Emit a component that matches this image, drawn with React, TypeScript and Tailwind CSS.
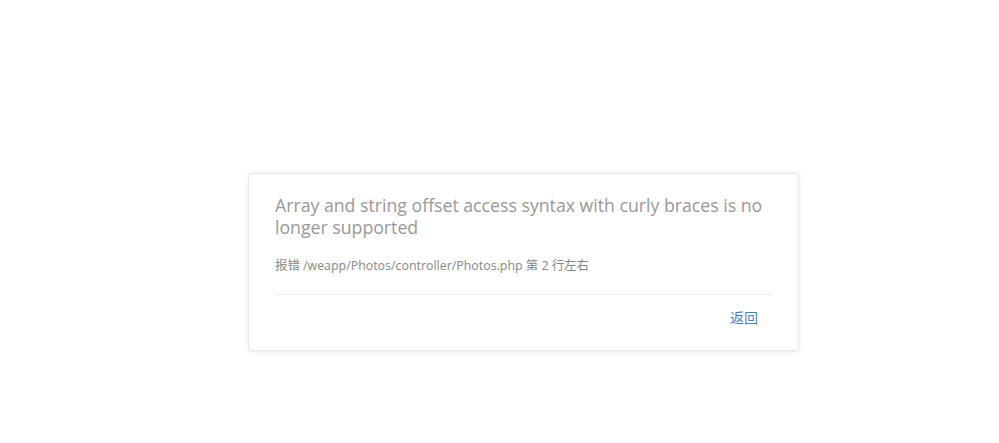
export default function App() {
  return (
    <div className="min-h-[443px] w-full bg-white pt-[173px] font-['Open_Sans','Noto_Sans_CJK_SC',sans-serif]">
      <div className="ml-[248px] w-[551px] rounded-[3px] border border-[#e8e8e8] bg-white px-[26px] pt-[20px] pb-[22px] shadow-[0_1px_6px_rgba(0,0,0,0.08)]">
        <h1 className="text-[17.7px] leading-[22px] text-[#999]">
          Array and string offset access syntax with curly braces is no longer supported
        </h1>
        <p className="mt-[19px] text-[12.4px] leading-[18px] text-[#888]">
          报错 /weapp/Photos/controller/Photos.php 第 2 行左右
        </p>
        <div className="mt-[19px] border-t border-[#eee]" />
        <div className="flex justify-end pt-[13px] pr-[14px]">
          <a href="#" className="text-[14px] leading-[20px] text-[#4a7fc8]">
            返回
          </a>
        </div>
      </div>
    </div>
  );
}
